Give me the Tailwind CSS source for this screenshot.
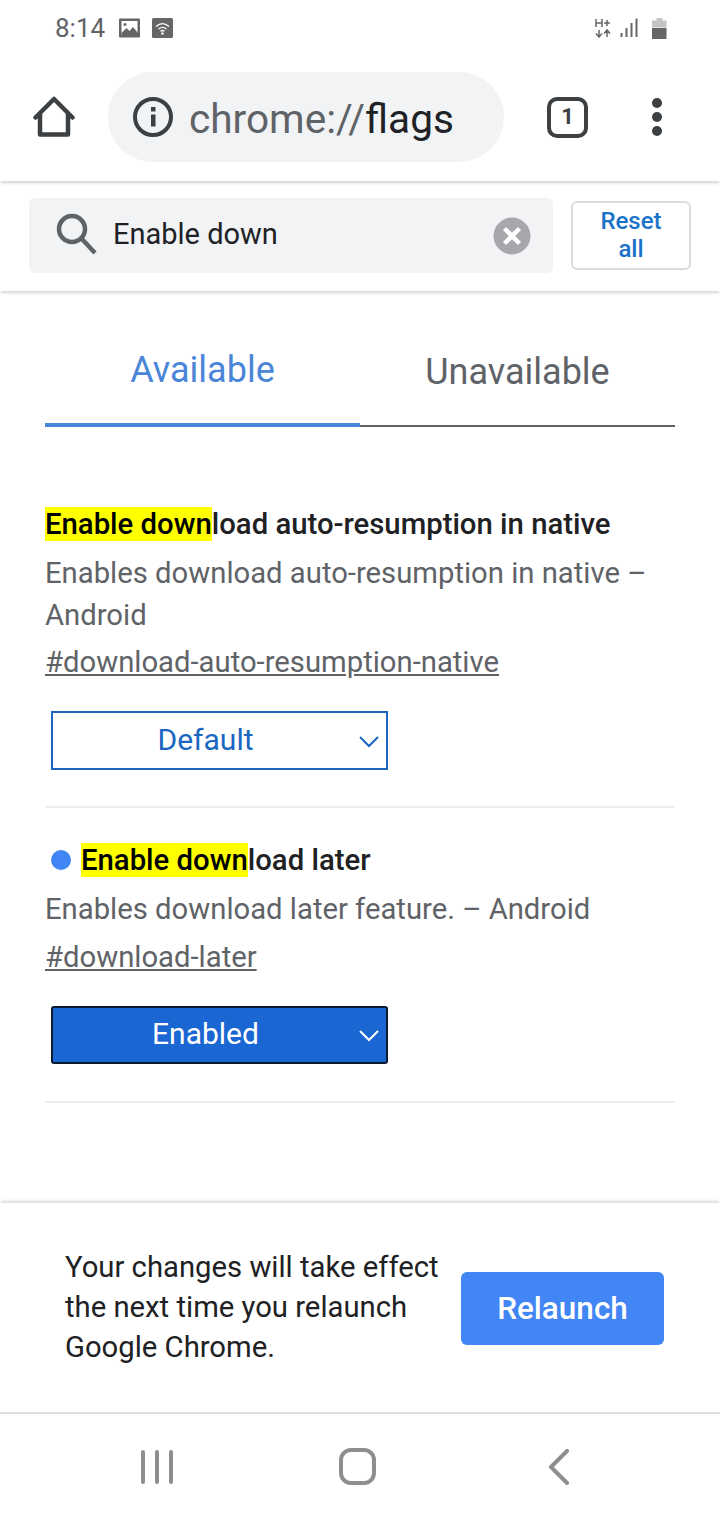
<!DOCTYPE html>
<html lang="en">
<head>
    <meta charset="UTF-8">
    <meta name="viewport" content="width=device-width, initial-scale=1.0">
    <title>chrome://flags</title>
    <script src="https://cdn.jsdelivr.net/npm/@tailwindcss/browser@4"></script>
</head>
<body class="bg-white font-['Roboto',sans-serif] text-[#202124]">
<div class="w-[720px] h-[1520px] flex flex-col overflow-hidden">

    <!-- status bar -->
    <div class="h-[56px] flex items-center justify-between pl-[55px] pr-[53px] text-[#5f6368]">
        <div class="flex items-center">
            <span class="text-[26px] leading-none">8:14</span>
            <svg class="ml-[14px]" width="22" height="20" viewBox="0 0 22 20"><rect width="21" height="19" y="0.5" rx="1" fill="#666"/><rect x="2.5" y="3" width="16" height="14" fill="#fff"/><circle cx="6" cy="6.5" r="1.5" fill="#666"/><path d="M2.5 15l5-5 3 3 3.500-4 5 6v2h-16.500z" fill="#666"/></svg>
            <svg class="ml-[11px]" width="21" height="20" viewBox="0 0 21 20"><rect width="21" height="20" rx="1.500" fill="#666"/><path d="M4 8.500c4-3.500 9-3.500 13 0M6.500 11c2.500-2 5.500-2 8 0M8.500 13.300c1.300-1 2.700-1 4 0" fill="none" stroke="#fff" stroke-width="1.300"/><circle cx="10.500" cy="15.500" r="1.200" fill="#fff"/></svg>
        </div>
        <div class="flex items-center">
            <svg width="16" height="20" viewBox="0 0 16 20" fill="none" stroke="#666" stroke-width="1.500"><path d="M1 1v8M7 1v8M1 5h6M9 5h6M12 2v6M4 19v-7M1 15.500l3 3.500 3-3.500M12 19v-7M9 15.500l3-3.500 3 3.500"/></svg>
            <svg class="ml-[9px]" width="18" height="20" viewBox="0 0 18 20" fill="#666"><rect x="0.500" y="15" width="2" height="4"/><rect x="5.500" y="10" width="2" height="9"/><rect x="10.500" y="5" width="2" height="14"/><rect x="15.500" y="0.500" width="2" height="18.500"/></svg>
            <svg class="ml-[14px]" width="15" height="21" viewBox="0 0 15 21"><path d="M4.500 0h6v2.500h4v7h-14.500v-7h4.500z" fill="#c4c4c4"/><rect y="10" width="14.500" height="11" fill="#666"/></svg>
        </div>
    </div>

    <!-- toolbar -->
    <div class="relative z-20 h-[125px] flex items-center shadow-[0_3px_3px_-1px_rgba(0,0,0,0.18)] pb-[3px]">
        <svg class="ml-[33px]" width="42" height="42" viewBox="0 0 42 42" fill="none" stroke="#3c4043" stroke-width="4.500" stroke-linejoin="round" stroke-linecap="round"><path d="M2.500 21.500L21 3l18.500 18.500"/><path d="M7 18v20.500h28V18"/></svg>
        <div class="ml-[33px] w-[396px] h-[90px] rounded-full bg-[#f1f3f4] flex items-center pl-[25px]">
            <svg width="40" height="40" viewBox="0 0 40 40"><circle cx="20" cy="20" r="18" fill="none" stroke="#3c4043" stroke-width="4"/><rect x="18" y="10" width="4.500" height="4.500" fill="#3c4043"/><rect x="18" y="17.500" width="4.500" height="12" fill="#3c4043"/></svg>
            <span class="ml-[16px] mt-[4px] text-[40.600px] leading-none text-[#5f6368]">chrome://<span class="text-[#202124]">flags</span></span>
        </div>
        <div class="ml-[43px] w-[41px] h-[41px] border-[4.500px] border-[#3c4043] rounded-[10px] flex items-center justify-center text-[22px] font-bold text-[#3c4043] leading-none">1</div>
        <div class="ml-[64px] flex flex-col gap-[4px]">
            <span class="w-[10px] h-[10px] rounded-full bg-[#3c4043]"></span>
            <span class="w-[10px] h-[10px] rounded-full bg-[#3c4043]"></span>
            <span class="w-[10px] h-[10px] rounded-full bg-[#3c4043]"></span>
        </div>
    </div>

    <!-- search band -->
    <div class="relative z-10 h-[110px] flex items-center pl-[29px] shadow-[0_3px_3px_-1px_rgba(0,0,0,0.16)] pb-[1px]">
        <div class="w-[524px] h-[75px] rounded-[6px] bg-[#f1f3f4] flex items-center pl-[27px]">
            <svg class="mb-[3px]" width="42" height="42" viewBox="0 0 42 42" fill="none" stroke="#5f6368" stroke-width="4.500"><circle cx="16" cy="16" r="13"/><path d="M25.500 25.500L39 40"/></svg>
            <span class="ml-[15px] mb-[2px] text-[29px] leading-none text-[#202124]">Enable down</span>
            <svg class="ml-auto mr-[22px]" width="38" height="38" viewBox="0 0 38 38"><circle cx="19" cy="19" r="18.500" fill="#a6a8ab"/><path d="M11.500 11.500l15 15M26.500 11.500l-15 15" stroke="#fff" stroke-width="4.500"/></svg>
        </div>
        <div class="ml-[18px] w-[120px] h-[69px] pb-[2px] rounded-[6px] border-2 border-[#dadce0] flex items-center justify-center text-center text-[24px] leading-[28px] font-medium text-[#1a73c8]">Reset<br>all</div>
    </div>

    <!-- tabs -->
    <div class="mx-[45px] mt-[41px] h-[95px] flex shrink-0">
        <div class="w-[315px] border-b-[4px] border-[#4a86d8] flex justify-center pt-[16px] text-[36px] leading-[44px] text-[#4a86d8]">Available</div>
        <div class="w-[315px] border-b-2 border-[#5f6368] flex justify-center pt-[18px] pb-[2px] text-[36px] leading-[44px] text-[#5f6368]">Unavailable</div>
    </div>

    <!-- flag items -->
    <div class="mx-[45px] mt-[74px]">
        <div class="h-[307px] border-b-2 border-[#eeeeee]">
            <div class="text-[29.300px] leading-[46px] font-medium text-[#202124]"><span class="bg-[#ffff00] text-black">Enable down</span>load auto-resumption in native</div>
            <div class="text-[29.250px] leading-[42px] text-[#5f6368] mt-[5px]">Enables download auto-resumption in native –<br>Android</div>
            <div class="text-[29.250px] leading-[48px] text-[#5f6368] underline mt-[2px]">#download-auto-resumption-native</div>
            <div class="mt-[25px] ml-[6px] w-[337px] h-[59px] border-2 border-[#1a66c0] flex items-center relative text-[#1a66c0] text-[30px] pb-[2px]">
                <span class="w-[305px] text-center">Default</span>
                <svg class="absolute right-[7px] top-[23px]" width="20" height="12" viewBox="0 0 20 12" fill="none" stroke="currentColor" stroke-width="2"><path d="M1 1l9 9 9-9"/></svg>
            </div>
        </div>

        <div class="h-[295px] border-b-2 border-[#eeeeee] pt-[28px]">
            <div class="flex items-center text-[29.300px] leading-[48px] font-medium text-[#202124]">
                <span class="ml-[6px] mr-[10px] w-[20px] h-[20px] rounded-full bg-[#4285f4]"></span>
                <span><span class="bg-[#ffff00] text-black">Enable down</span>load later</span>
            </div>
            <div class="text-[29.250px] leading-[48px] text-[#5f6368] mt-[1px]">Enables download later feature. – Android</div>
            <div class="text-[29.250px] leading-[48px] text-[#5f6368] underline">#download-later</div>
            <div class="mt-[25px] ml-[6px] w-[337px] h-[58px] border-2 border-[#0a1a30] rounded-[3px] bg-[#1a66d2] flex items-center relative text-white text-[30px] pb-[4px]">
                <span class="w-[305px] text-center">Enabled</span>
                <svg class="absolute right-[7px] top-[22px]" width="20" height="12" viewBox="0 0 20 12" fill="none" stroke="currentColor" stroke-width="2"><path d="M1 1l9 9 9-9"/></svg>
            </div>
        </div>
    </div>

    <!-- relaunch bar -->
    <div class="mt-[100px] h-[211px] flex items-center shadow-[0_-3px_3px_-1px_rgba(0,0,0,0.14)] border-b-2 border-[#dddddd] pl-[65px]">
        <div class="w-[396px] mb-[2px] text-[29.250px] leading-[40px] text-[#202124]">Your changes will take effect the next time you relaunch Google Chrome.</div>
        <div class="w-[203px] h-[73px] mt-[1px] pt-[2px] rounded-[6px] bg-[#4285f4] flex items-center justify-center text-white text-[31.500px] font-medium">Relaunch</div>
    </div>

    <!-- nav bar -->
    <div class="flex-1 flex items-center relative">
        <div class="ml-[141px] flex gap-[10px]">
            <span class="w-[4px] h-[34px] rounded-full bg-[#8e8e8e]"></span>
            <span class="w-[4px] h-[34px] rounded-full bg-[#8e8e8e]"></span>
            <span class="w-[4px] h-[34px] rounded-full bg-[#8e8e8e]"></span>
        </div>
        <div class="ml-[166px] mb-[2px] w-[37px] h-[37px] border-[4px] border-[#8e8e8e] rounded-[12px]"></div>
        <svg class="ml-[171px]" width="24" height="36" viewBox="0 0 24 36" fill="none" stroke="#8e8e8e" stroke-width="4" stroke-linecap="round" stroke-linejoin="round"><path d="M20 2L4 18l16 16"/></svg>
    </div>
</div>
</body>
</html>
